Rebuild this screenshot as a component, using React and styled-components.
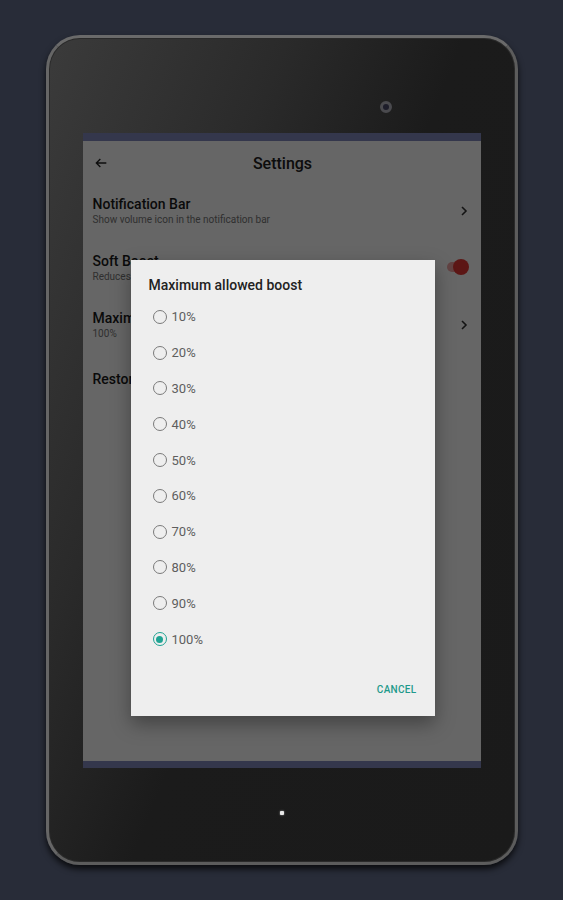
import React, { useState } from "react";
import styled, { createGlobalStyle } from "styled-components";

const GlobalStyle = createGlobalStyle`
  html, body {
    margin: 0;
    padding: 0;
    background: #282c38;
    font-family: Roboto, "Noto Sans", "Liberation Sans", sans-serif;
  }
  * { box-sizing: border-box; }
`;

const Page = styled.div`
  width: 563px;
  height: 900px;
  display: flex;
  justify-content: center;
  padding-top: 35px;
`;

const Tablet = styled.div`
  width: 472px;
  height: 830px;
  border-radius: 34px;
  border: 3px solid #5c5c5c;
  border-top-color: #6a6a6a;
  border-left-color: #666;
  background: linear-gradient(112deg, #3b3b3b 0%, #2a2a2a 30%, #1b1b1b 52%, #1a1a1a 100%);
  box-shadow: 0 4px 6px rgba(0, 0, 0, 0.75), inset 0 0 0 1px #2a2a2a;
  display: flex;
  flex-direction: column;
  align-items: center;
`;

const TopBezel = styled.div`
  width: 100%;
  height: 95px;
  display: flex;
  align-items: center;
  padding-left: 331px;
  padding-top: 42px;
`;

const Camera = styled.div`
  width: 12px;
  height: 12px;
  border-radius: 50%;
  border: 3px solid #4a4a4e;
  background: #1d1d2a;
`;

const Screen = styled.div`
  width: 398px;
  height: 635px;
  display: flex;
  flex-direction: column;
`;

const Strip = styled.div`
  height: ${(p) => p.h}px;
  background: #34374c;
`;

const AppArea = styled.div`
  flex: 1;
  position: relative;
  background: #ffffff;
  overflow: hidden;
`;

const Toolbar = styled.div`
  height: 44px;
  display: flex;
  align-items: center;
  padding-left: 10px;
`;

const ToolbarTitle = styled.div`
  flex: 1;
  text-align: center;
  font-size: 16px;
  font-weight: 500;
  color: #212121;
  margin-right: 24px;
`;

const Row = styled.div`
  display: flex;
  align-items: center;
  padding: ${(p) => (p.single ? "8px" : "10px")} 12px 15px 10px;
  min-height: ${(p) => (p.single ? 52 : 57)}px;
`;

const RowText = styled.div`
  flex: 1;
  display: flex;
  flex-direction: column;
`;

const RowTitle = styled.div`
  font-size: 14px;
  font-weight: 500;
  line-height: 18px;
  color: #1a1a1a;
`;

const RowSub = styled.div`
  font-size: 10px;
  line-height: 14px;
  color: #777;
`;

const Toggle = styled.div`
  width: 24px;
  height: 16px;
  display: flex;
  align-items: center;
  justify-content: flex-end;
  position: relative;
  margin-top: -2px;
  &::before {
    content: "";
    position: absolute;
    left: 2px;
    right: 4px;
    height: 10px;
    border-radius: 5px;
    background: #f2a5a5;
  }
`;

const Thumb = styled.div`
  width: 16px;
  height: 16px;
  border-radius: 50%;
  background: #e53935;
  position: relative;
`;

const Scrim = styled.div`
  position: absolute;
  inset: 0;
  background: rgba(0, 0, 0, 0.6);
`;

const Dialog = styled.div`
  position: absolute;
  left: 48px;
  top: 119px;
  width: 304px;
  height: 456px;
  background: #eeeeee;
  box-shadow: 0 8px 18px rgba(0, 0, 0, 0.35);
  display: flex;
  flex-direction: column;
`;

const DialogTitle = styled.div`
  padding: 16px 18px 0 18px;
  font-size: 14px;
  font-weight: 500;
  line-height: 18px;
  color: #222;
  margin-bottom: 5px;
`;

const OptionList = styled.div`
  display: flex;
  flex-direction: column;
`;

const Option = styled.label`
  height: 35.8px;
  display: flex;
  align-items: center;
  gap: 5px;
  padding-left: 22px;
  font-size: 13px;
  color: #5e5e5e;
  cursor: pointer;
`;

const Radio = styled.span`
  width: 14px;
  height: 14px;
  border-radius: 50%;
  border: 1.6px solid ${(p) => (p.checked ? "#1fa393" : "#7a7a7a")};
  display: flex;
  align-items: center;
  justify-content: center;
  &::after {
    content: "";
    width: 7px;
    height: 7px;
    border-radius: 50%;
    background: ${(p) => (p.checked ? "#1fa393" : "transparent")};
  }
`;

const Actions = styled.div`
  flex: 1;
  display: flex;
  justify-content: flex-end;
  align-items: center;
  padding: 6px 18px 0 0;
`;

const CancelButton = styled.button`
  border: none;
  background: none;
  padding: 0;
  font-family: inherit;
  font-size: 10px;
  font-weight: 500;
  letter-spacing: 0.3px;
  color: #1f9a8b;
`;

const BottomBezel = styled.div`
  flex: 1;
  width: 100%;
  display: flex;
  align-items: center;
  justify-content: center;
  padding-bottom: 4px;
`;

const HomeDot = styled.div`
  width: 4px;
  height: 4px;
  background: #e8e8e8;
  border-radius: 1px;
  box-shadow: 0 0 2px #aaa;
`;

const ArrowIcon = () => (
  <svg width="16" height="16" viewBox="0 0 24 24" fill="none" stroke="#222" strokeWidth="2">
    <path d="M20 12H5M11 6l-6 6 6 6" />
  </svg>
);

const Chevron = () => (
  <svg width="10" height="14" viewBox="0 0 10 14" fill="none" stroke="#333" strokeWidth="1.6">
    <path d="M3 3l4 4-4 4" />
  </svg>
);

const options = [10, 20, 30, 40, 50, 60, 70, 80, 90, 100];

export default function App() {
  const [value, setValue] = useState(100);
  return (
    <>
      <GlobalStyle />
      <Page>
        <Tablet>
          <TopBezel>
            <Camera />
          </TopBezel>
          <Screen>
            <Strip h={8} />
            <AppArea>
              <Toolbar>
                <ArrowIcon />
                <ToolbarTitle>Settings</ToolbarTitle>
              </Toolbar>
              <Row>
                <RowText>
                  <RowTitle>Notification Bar</RowTitle>
                  <RowSub>Show volume icon in the notification bar</RowSub>
                </RowText>
                <Chevron />
              </Row>
              <Row>
                <RowText>
                  <RowTitle>Soft Boost</RowTitle>
                  <RowSub>Reduces distortion at high boost levels</RowSub>
                </RowText>
                <Toggle>
                  <Thumb />
                </Toggle>
              </Row>
              <Row>
                <RowText>
                  <RowTitle>Maximum allowed boost</RowTitle>
                  <RowSub>{value}%</RowSub>
                </RowText>
                <Chevron />
              </Row>
              <Row single>
                <RowText>
                  <RowTitle>Restore defaults</RowTitle>
                </RowText>
              </Row>
              <Scrim />
              <Dialog>
                <DialogTitle>Maximum allowed boost</DialogTitle>
                <OptionList>
                  {options.map((o) => (
                    <Option key={o} onClick={() => setValue(o)}>
                      <Radio checked={value === o} />
                      {o}%
                    </Option>
                  ))}
                </OptionList>
                <Actions>
                  <CancelButton>CANCEL</CancelButton>
                </Actions>
              </Dialog>
            </AppArea>
            <Strip h={7} />
          </Screen>
          <BottomBezel>
            <HomeDot />
          </BottomBezel>
        </Tablet>
      </Page>
    </>
  );
}
